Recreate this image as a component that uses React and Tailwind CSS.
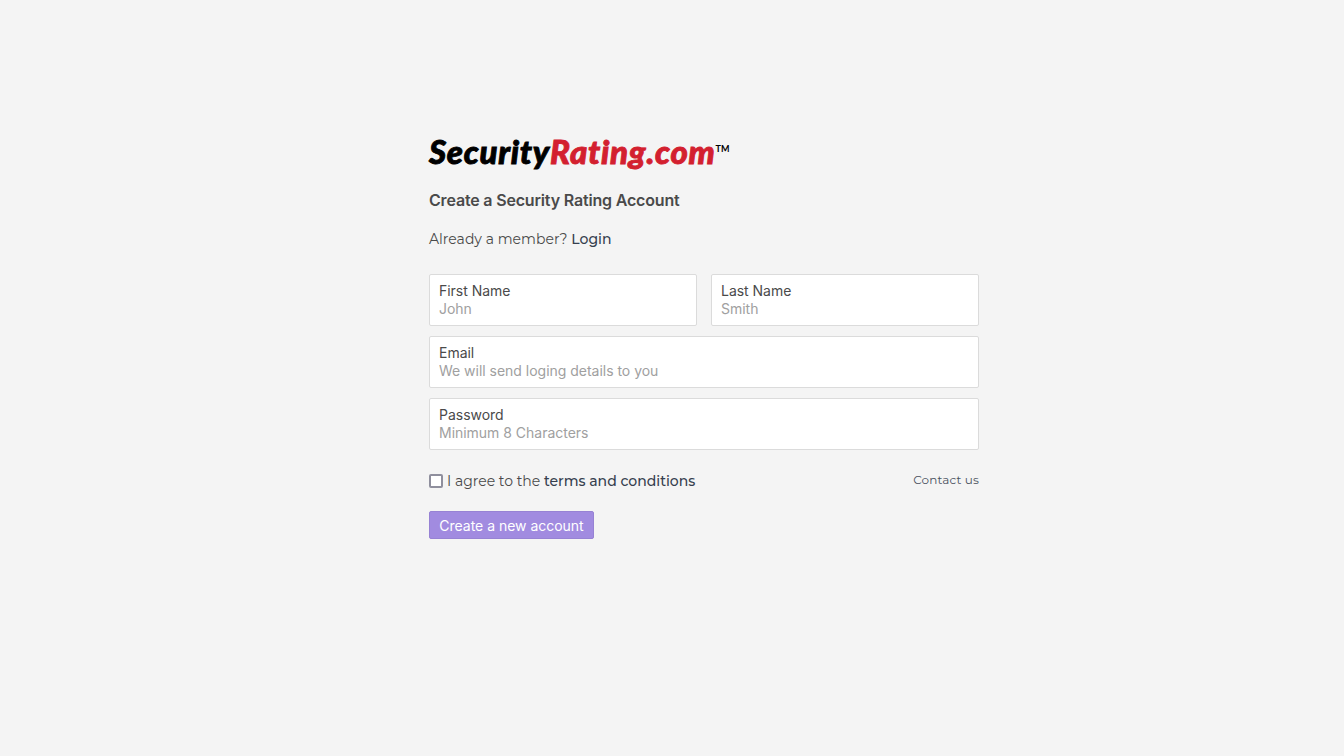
function Field({ label, placeholder, type = "text", className = "" }) {
  return (
    <label className={`block h-[52px] rounded-[2px] border border-[#dbdbdb] bg-white px-[9px] pt-[7px] ${className}`}>
      <span className="block h-[18px] text-[14px] leading-[18px] tracking-[-0.02px] text-[#4a4a4a]">{label}</span>
      <input type={type} placeholder={placeholder} className="block h-[18px] w-full text-[14px] leading-[18px] tracking-[-0.02px] outline-none placeholder:text-[#a0a0a0]" />
    </label>
  );
}

export default function App() {
  return (
    <main className="flex min-h-screen justify-center bg-[#f4f4f4] pl-16 font-['Inter',sans-serif] text-[#4a4a4a]">
      <form className="w-[550px] pt-[133px]">
        <h1 className="flex h-[36px] items-start whitespace-nowrap font-['Lato',sans-serif] text-[33px] leading-[36px] font-black italic tracking-[0.75px] text-black [-webkit-text-stroke:0.9px_currentColor]">
          <span>Security</span><span className="text-[#d3202f]">Rating.com</span>
          <span className="pt-[6px] text-[9px] leading-[20px] font-bold tracking-normal not-italic [-webkit-text-stroke:0px]">TM</span>
        </h1>
        <h2 className="mt-[19px] h-6 text-[16px] leading-6 font-semibold tracking-[-0.011em]">Create a Security Rating Account</h2>
        <p className="mt-[15px] h-6 font-['Montserrat','Inter',sans-serif] text-[14px] leading-6 tracking-[0.03px]">Already a member? <a className="font-medium text-[#363f4f]">Login</a></p>
        <div className="mt-[23px] grid grid-cols-2 gap-x-[14px] gap-y-[10px]">
          <Field label="First Name" placeholder="John" />
          <Field label="Last Name" placeholder="Smith" />
          <Field label="Email" placeholder="We will send loging details to you" className="col-span-2" />
          <Field label="Password" placeholder="Minimum 8 Characters" type="password" className="col-span-2" />
        </div>
        <div className="mt-[19px] flex h-6 items-center justify-between font-['Montserrat','Inter',sans-serif]">
          <label className="flex items-center text-[14px] leading-6">
            <input type="checkbox" className="mr-1 h-[14px] w-[14px] appearance-none rounded-[2px] border-2 border-[#8f8f9d] bg-white" />
            <span>I agree to the <a className="font-medium text-[#363f4f]">terms and conditions</a></span>
          </label>
          <a className="pb-0.5 text-[12px] tracking-[0.15px] text-[#4a5160]">Contact us</a>
        </div>
        <button type="button" className="mt-[18px] h-7 w-[165px] rounded-[2px] border border-[#9782d4] bg-[#a18be0] pt-px text-[14px] tracking-[-0.02px] text-white">Create a new account</button>
      </form>
    </main>
  );
}
